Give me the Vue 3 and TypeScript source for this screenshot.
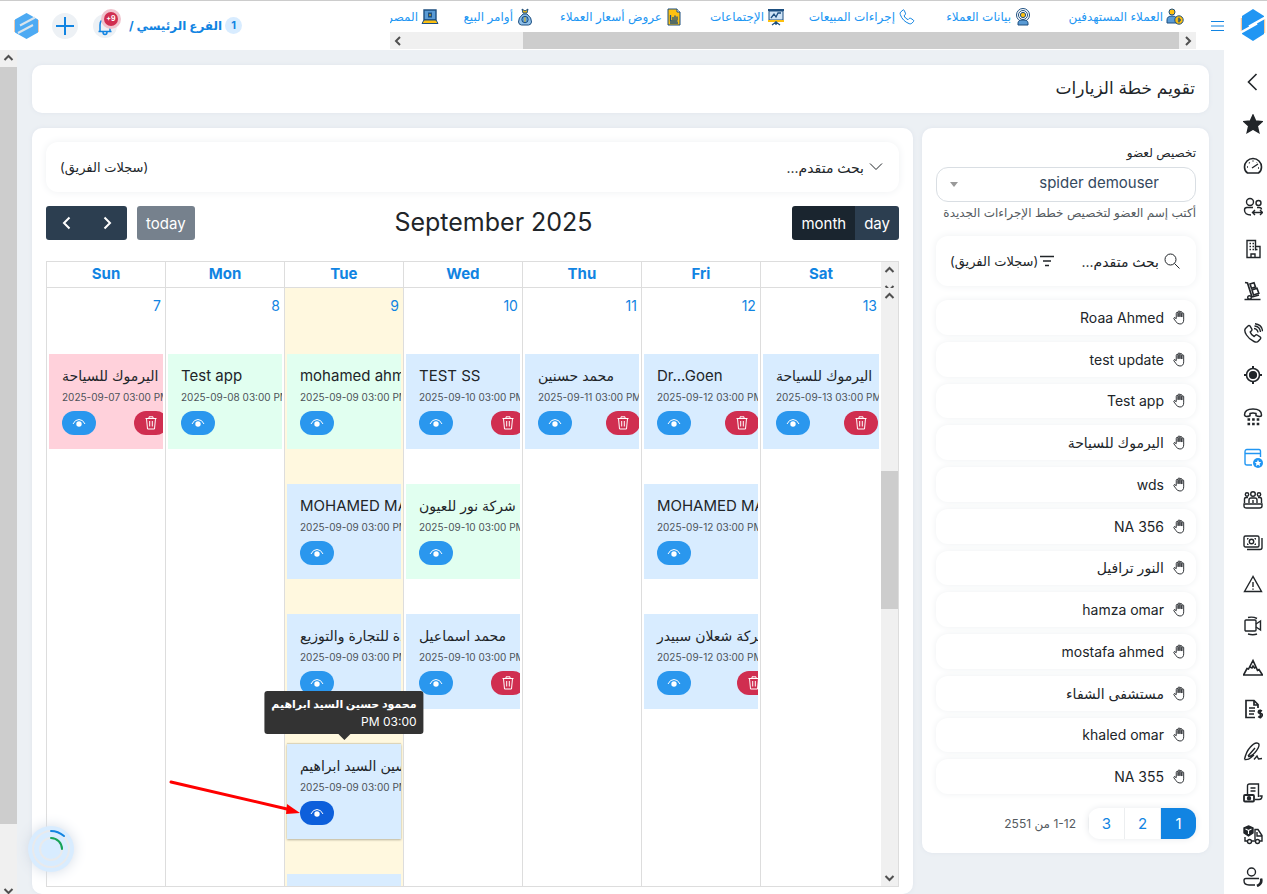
<script setup lang="ts">
import { ref } from 'vue'

interface VisitEvent {
  title: string
  time: string
  tone: 'pink' | 'green' | 'blue'
  remove?: 'near' | 'mid' | 'far'
  active?: boolean
}
interface Day {
  name: string
  date: number
  today?: boolean
  events: VisitEvent[]
}

const topLinks = [
  { label: 'العملاء المستهدفين', icon: 'lead' },
  { label: 'بيانات العملاء', icon: 'target' },
  { label: 'إجراءات المبيعات', icon: 'phone' },
  { label: 'الإجتماعات', icon: 'board' },
  { label: 'عروض أسعار العملاء', icon: 'quote' },
  { label: 'أوامر البيع', icon: 'bag' },
  { label: 'المصروفات', icon: 'laptop' },
]

const topIcons: Record<string, string> = {
  lead: '<circle cx="6" cy="4" r="3" fill="#fdc010" stroke="#1d4f80"/><path d="M1 15v-3q0-4 5-4t5 4v3z" fill="#5a9bd5" stroke="#1d4f80"/><circle cx="13" cy="12" r="4.2" fill="#fdc010" stroke="#1d4f80"/><path d="M13 9.5v5M11.8 11h2.4v2h-2.4" fill="none" stroke="#1d4f80"/>',
  target: '<circle cx="9" cy="7" r="6.5" fill="none" stroke="#1d4f80"/><circle cx="9" cy="7" r="4.5" fill="none" stroke="#1d4f80"/><circle cx="9" cy="7" r="2.6" fill="#fdc010" stroke="#1d4f80"/><path d="M4 17v-2q0-3 5-3t5 3v2z" fill="#5a9bd5" stroke="#1d4f80"/>',
  phone: '<path d="M5 2 2.500 4.200Q1.800 5 2.300 6.600 4.500 13 11.200 15.700q1.600.5 2.600-.4l1.700-1.800q.6-.8-.2-1.500l-2.600-1.700q-.8-.4-1.500.2l-1.200 1.200Q7 10.300 6 7.800l1.200-1.100q.7-.8.2-1.600L6.200 2.300Q5.700 1.500 5 2Z" fill="none" stroke="#1184e2"/>',
  board: '<path d="M1 2h16" stroke="#1d4f80" stroke-width="2"/><path d="M2 3h14v9H2z" fill="#cfe4f7" stroke="#1d4f80"/><path d="M1 13h16" stroke="#fdc010" stroke-width="2"/><path d="M4 10l3-4 2 3 2-4 3 0M9 13v4M5 17l4-3 4 3" fill="none" stroke="#1d4f80" stroke-width="1.300"/>',
  quote: '<path d="M3 1h9l3 3v13H3z" fill="#fdc010" stroke="#1d4f80"/><path d="M12 1v3h3" fill="#fff" stroke="#1d4f80"/><path d="M5.500 7v6h7M8 12V9M10 12V7.500M12 12V8.500M5 15h8" stroke="#1d4f80" stroke-width="1.300" fill="none"/>',
  bag: '<path d="M6 1l3 2 3-2-1 4H7z" fill="#fdc010" stroke="#1d4f80"/><path d="M7 6h4q5 4 4.500 8-.5 3-3 3h-7q-2.500 0-3-3Q2 10 7 6z" fill="#8fc0ea" stroke="#1d4f80"/><circle cx="9" cy="11.500" r="3.200" fill="#5a9bd5" stroke="#1d4f80"/><path d="M9 9.300v4.500" stroke="#fdc010"/>',
  laptop: '<path d="M3 2h12v10H3z" fill="#5a9bd5" stroke="#1d4f80" stroke-width="1.400"/><path d="M7 4.500h4v5H7z" fill="#1d4f80"/><path d="M8 7h2" stroke="#fdc010"/><path d="M3 12h12l2 3.500H1z" fill="#fdc010" stroke="#1d4f80"/>',
}

const sideLinks = [
  { label: 'رجوع', d: '<path d="M13.500 2 5.500 10l8 8" stroke-width="1.600"/>' },
  { label: 'المفضلة', d: '<path fill="currentColor" d="m10 1 2.700 6 6.500.6-4.900 4.400 1.500 6.500-5.800-3.400-5.800 3.400 1.500-6.500L.8 7.600 7.300 7z"/>' },
  { label: 'لوحة التحكم', d: '<path stroke-width="1.600" d="M4.500 17Q1.500 15 1.500 11a8.500 8.500 0 0 1 17 0q0 4-3 6z"/><path d="M9 12l6-4M4 11h1M6 6.500l.7.7M10 4.500v1M14 6.500l-.3.3M15 12h1"/>' },
  { label: 'العملاء', d: '<circle cx="7" cy="5" r="3.500"/><circle cx="15.500" cy="6" r="2.500"/><path d="M8 18Q1.500 18 1.500 13q0-2.500 2.500-2.500h6M14 10.500h2q2.500 0 2.500 2M9.500 15.500h10M12 13l-2.500 2.500L12 18M17 13l2.500 2.500L17 18"/>' },
  { label: 'الشركات', d: '<path d="M4 18.500V1.500h8.500v6h4.500v11zM12.500 7.500v4M8 18.500v-3.500h4v3.500"/><path stroke-dasharray="1.500 1.500" d="M6.500 4.500h4.500M6.500 7.500h4.500M6.500 10.500h4.500M13 10.500h3"/>' },
  { label: 'المخزون', d: '<path d="M2 1.500 4.500 2 9 16M1.500 18.500h16M9 16l7-2" stroke-width="1.700"/><circle cx="6.500" cy="16.500" r="1.800"/><path stroke-width="1.600" d="m7 3 4-1.300 1.500 4.300-4 1.300zM9 9l5-1.700 1.800 5-5.300 1.700z"/>' },
  { label: 'المكالمات', d: '<path d="M5 3 2.500 5.500Q.7 7.500 3.500 12t7.500 6.500q3 1.500 4.500-.5l1.800-2q1-1.200-.3-2.200l-2.800-1.800q-1-.6-1.800.3l-1.200 1.200q-3-1.500-4-4.500l1.300-1.300q.8-.8.200-1.800L7 3Q6 2 5 3ZM11 5.500q3.500.5 4 4M11.500 3q5.500.5 6 6M12 .8q7 .7 7.500 7.500"/>' },
  { label: 'الموقع', d: '<circle cx="10" cy="10" r="6.500" stroke-width="1.600"/><circle cx="10" cy="10" r="3.400" fill="currentColor"/><path stroke-width="2" d="M10 1v3M10 16v3M1 10h3M16 10h3"/>' },
  { label: 'الاتصال', d: '<path stroke-width="1.500" d="M1.500 8q0-6 8.500-6t8.500 6q0 1.500-2 1.500t-3.500-.8V6.500q-3-1-6 0v2.200Q5 9.500 3.500 9.500t-2-1.500Z"/><path stroke-width="2.400" stroke-dasharray="2.600 2" d="M4.500 12.500h12M4.500 17h12"/>' },
  { label: 'خطة الزيارات', active: true, d: '<path d="M9 17H4q-2 0-2-2V4q0-2.500 2-2.500h12q1.500 0 1.500 2V9M2 5.500h15.500"/><circle cx="15" cy="15" r="5" fill="currentColor" stroke="none"/><path fill="#fff" stroke="none" d="m15 11.700 1 2.200 2.300.2-1.700 1.500.5 2.300-2.100-1.200-2.100 1.200.5-2.300-1.700-1.500 2.300-.2z"/>' },
  { label: 'الاجتماعات', d: '<circle cx="10" cy="4" r="2.300"/><circle cx="4" cy="4.500" r="1.700"/><circle cx="16" cy="4.500" r="1.700"/><path d="M1.500 13V9q0-1.500 2-1.500H5M6 13V10q0-2 2-2h4q2 0 2 2v3M10 13v-3M15 7.500h1.500q2 0 2 1.500v4M1 14h18v2q0 2-2.500 2h-13Q1 18 1 16z"/>' },
  { label: 'المدفوعات', d: '<rect x="1" y="4" width="15" height="11" rx="1.500"/><circle cx="8.500" cy="9.500" r="2.200"/><path d="M4 7q1 0 1-1M13 7q-1 0-1-1M4 12q1 0 1 1M13 12q-1 0-1 1M4 17.500h13q2 0 2-2V6"/>' },
  { label: 'التنبيهات', d: '<path d="M10 2.500 1.500 17.500h17zM10 8v5M10 14.500v1.200"/>' },
  { label: 'الفيديو', d: '<rect x="2" y="4" width="11" height="11" rx="1"/><path d="m13 8 4.500-3v9L13 11M5 1.500q5-1 9 1M5 18q5 1.500 9 0"/>' },
  { label: 'الأهداف', d: '<path d="M.5 17h19L16 11.500l-1.500.8L10 2.500 5.500 11 4 10.500zM7 9l2 1 1-2 1.500 2L13 9" stroke-width="1.600"/>' },
  { label: 'الفواتير', d: '<path d="M12 18.500H3v-17h8l4 4V9M11 1.500v4.500h4" stroke-width="1.700"/><path d="M6 9h6M6 12h6M6 15h5" stroke-width="1.500"/><path d="M19 12q-3-1.500-3.500.5t2 2 1.500 2.500-3.800.5M17.300 10.500v9" stroke-width="1.700"/>' },
  { label: 'العقود', d: '<path d="M1.500 18.500Q3 11 7 6.500 12 .5 15.500 2.500 17.500 5 12 11.500 8 16 5 15.500M5 15l7-8M1.500 18.500q4 .5 6.500-2l3-2.500M11 18.500l3-3.500 1.500 3 3.500-.5"/>' },
  { label: 'الإيصالات', d: '<path d="M4.500 11V3q0-2 2-2h9v13M7.500 5h5M7.500 8h5M12 16.500h4q3 0 3-3.500h-2.500"/><rect x="1" y="12" width="10" height="6.500" rx="1" stroke-width="1.800"/><circle cx="6" cy="15.200" r="1.500" fill="currentColor"/>' },
  { label: 'التوصيل', d: '<path fill="currentColor" d="m5.500 1 4.500 2v5l-4.500 3L1 8V3z"/><path stroke="#fff" stroke-width="1.100" d="m2.500 4 3 1.400 3-1.400M5.500 5.500V9"/><path d="M2 12v4h2M9 16h3M12 15V4.500h3l4 6V16h-2M14 7v4h5"/><circle cx="6.500" cy="16.500" r="2"/><circle cx="14.500" cy="16.500" r="2"/>' },
  { label: 'خدمة العملاء', d: '<circle cx="8.500" cy="5" r="4"/><path d="M12 18H6Q1 18 1 13.500q0-2 2-2h13"/><path stroke-width="2.600" d="M18 11.500q1.500 5-4 7.500"/>' },
]

const members = [
  'Roaa Ahmed', 'test update', 'Test app', 'اليرموك للسياحة', 'wds', 'NA 356',
  'النور ترافيل', 'hamza omar', 'mostafa ahmed', 'مستشفى الشفاء', 'khaled omar', 'NA 355',
]

const days: Day[] = [
  { name: 'Sun', date: 7, events: [
    { title: 'اليرموك للسياحة', time: '2025-09-07 03:00 PM', tone: 'pink', remove: 'mid' },
  ] },
  { name: 'Mon', date: 8, events: [
    { title: 'Test app', time: '2025-09-08 03:00 PM', tone: 'green' },
  ] },
  { name: 'Tue', date: 9, today: true, events: [
    { title: 'mohamed ahmed', time: '2025-09-09 03:00 PM', tone: 'green' },
    { title: 'MOHAMED MAHMOUD', time: '2025-09-09 03:00 PM', tone: 'blue' },
    { title: 'المتحدة للتجارة والتوزيع', time: '2025-09-09 03:00 PM', tone: 'blue' },
    { title: 'محمود حسين السيد ابراهيم', time: '2025-09-09 03:00 PM', tone: 'blue', active: true },
    { title: 'شركة النور', time: '2025-09-09 03:00 PM', tone: 'blue' },
  ] },
  { name: 'Wed', date: 10, events: [
    { title: 'TEST SS', time: '2025-09-10 03:00 PM', tone: 'blue', remove: 'mid' },
    { title: 'شركة نور للعيون', time: '2025-09-10 03:00 PM', tone: 'green' },
    { title: 'محمد اسماعيل', time: '2025-09-10 03:00 PM', tone: 'blue', remove: 'mid' },
  ] },
  { name: 'Thu', date: 11, events: [
    { title: 'محمد حسنين', time: '2025-09-11 03:00 PM', tone: 'blue', remove: 'near' },
  ] },
  { name: 'Fri', date: 12, events: [
    { title: 'Dr...Goen', time: '2025-09-12 03:00 PM', tone: 'blue', remove: 'near' },
    { title: 'MOHAMED MAHMOUD', time: '2025-09-12 03:00 PM', tone: 'blue' },
    { title: 'شركة شعلان سبيدر', time: '2025-09-12 03:00 PM', tone: 'blue', remove: 'far' },
  ] },
  { name: 'Sat', date: 13, events: [
    { title: 'اليرموك للسياحة', time: '2025-09-13 03:00 PM', tone: 'blue', remove: 'near' },
  ] },
]

const isArabic = (s: string) => /[\u0600-\u06ff]/.test(s)
const member = ref('spider demouser')
const page = ref(1)
const view = ref('month')
</script>

<template>
  <div class="app" dir="rtl">
    <aside class="side">
      <a href="#" class="brand" aria-label="Spider">
        <svg width="26" height="32" viewBox="0 0 26 32">
          <path d="M1.500 9v15M24.500 9v15" stroke="#f8c9a0" stroke-width="1.500" />
          <path d="M13 0 24 7v18l-11 7L2 25V7z" fill="#2196f3" />
          <path d="M26 8 9 17.500M0 24 17 14.500" stroke="#fff" stroke-width="2.500" />
        </svg>
      </a>
      <nav class="side-nav">
        <a v-for="s in sideLinks" :key="s.label" href="#" :aria-label="s.label" :class="{ on: s.active }">
          <svg width="20" height="20" viewBox="0 0 20 20" fill="none" stroke="currentColor" stroke-width="1.400" v-html="s.d" />
        </a>
      </nav>
    </aside>

    <div class="body">
      <header class="top">
        <button class="burger" aria-label="القائمة">
          <svg width="13" height="14" viewBox="0 0 13 14"><path d="M0 2.500h13M0 7h13M0 11.500h13" stroke="#1184e2" /></svg>
        </button>
        <div class="links">
          <nav class="link-row">
            <a v-for="l in topLinks" :key="l.icon" href="#">
              <svg width="18" height="18" viewBox="0 0 18 18" v-html="topIcons[l.icon]" />
              <span>{{ l.label }}</span>
            </a>
          </nav>
          <div class="hbar">
            <svg width="17" height="17" viewBox="0 0 17 17"><path d="m7 5 4 4-4 4" /></svg>
            <i class="hthumb" />
            <i class="hrest" />
            <svg width="17" height="17" viewBox="0 0 17 17"><path d="M10 5 6 9l4 4" /></svg>
          </div>
        </div>
        <div class="account">
          <span class="count">1</span>
          <a href="#" class="branch">الفرع الرئيسي /</a>
          <button class="bell" aria-label="الإشعارات">
            <svg width="16" height="20" viewBox="0 0 16 20"><path d="M1.500 15.500h13M3 15V9q0-5.500 5-5.500T13 9v6M6 16q0 2.500 2 2.500t2-2.500" fill="none" stroke="#1184e2" stroke-width="1.500" /></svg>
            <b>9+</b>
          </button>
          <button class="plus" aria-label="إضافة">
            <svg width="18" height="18" viewBox="0 0 18 18"><path d="M9 0v18M0 9h18" stroke="#1184e2" stroke-width="2" /></svg>
          </button>
          <a href="#" class="mini" aria-label="Spider">
            <svg width="25" height="26" viewBox="0 0 25 26">
              <path d="M1 7v12M24 7v12" stroke="#f3cdb0" stroke-width="2" />
              <path d="M12.500 0 24 6.500v13L12.500 26 1 19.500v-13z" fill="#4daaf3" />
              <path d="M21 4.500 6 12.500M19 12 4 20" stroke="#d9e4ec" stroke-width="2" />
            </svg>
          </a>
        </div>
      </header>

      <div class="scroller">
        <main class="content">
          <h1 class="card title">تقويم خطة الزيارات</h1>
          <div class="cols">
            <section class="card assign">
              <label for="member" class="lbl">تخصيص لعضو</label>
              <div class="picker">
                <select id="member" v-model="member"><option>spider demouser</option></select>
              </div>
              <p class="hint">أكتب إسم العضو لتخصيص خطط الإجراءات الجديدة</p>
              <div class="filter">
                <button>
                  <svg width="16" height="16" viewBox="0 0 16 16" fill="none" stroke="#212529"><circle cx="6.500" cy="6.500" r="5.500" /><path d="m10.500 10.500 5 5" /></svg>
                  <span>بحث متقدم...</span>
                </button>
                <button class="records">
                  <svg width="14" height="12" viewBox="0 0 14 12"><path d="M0 1.500h14M3 6h8M5 10.500h4" stroke="#212529" stroke-width="1.500" /></svg>
                  <span>(سجلات الفريق)</span>
                </button>
              </div>
              <ul class="members">
                <li v-for="m in members" :key="m">
                  <svg width="13" height="15" viewBox="0 0 14 16" fill="none" stroke="#212529"><path d="M3.500 9V3.500q0-1 1-1t1 1V7.500M5.500 7V2q0-1 1-1t1 1v5.500M7.500 7V2.500q0-1 1-1t1 1v5M9.500 7.500V4q0-1 1-1t1 1v6.500q0 4.500-4 4.500-3 0-4.200-2.500L1 9.500q-.4-1 .4-1.400.8-.3 1.300.4l.8 1.200" /></svg>
                  <span>{{ m }}</span>
                </li>
              </ul>
              <div class="pager">
                <div class="pages">
                  <button v-for="n in 3" :key="n" :class="{ on: page === n }" @click="page = n">{{ n }}</button>
                </div>
                <span>1-12 من 2551</span>
              </div>
            </section>

            <section class="card cal">
              <div class="filter">
                <button>
                  <svg width="14" height="10" viewBox="0 0 14 10" fill="none" stroke="#212529"><path d="m1 1.500 6 6 6-6" /></svg>
                  <span>بحث متقدم...</span>
                </button>
                <span>(سجلات الفريق)</span>
              </div>
              <div class="bar" dir="ltr">
                <div class="left">
                  <div class="group">
                    <button class="nav" aria-label="prev"><svg width="12" height="14" viewBox="0 0 12 14"><path d="M8.500 1.500 3 7l5.500 5.500" /></svg></button>
                    <button class="nav" aria-label="next"><svg width="12" height="14" viewBox="0 0 12 14"><path d="M3.500 1.500 9 7l-5.500 5.500" /></svg></button>
                  </div>
                  <button class="today-btn">today</button>
                </div>
                <h2>September 2025</h2>
                <div class="group">
                  <button :class="{ on: view === 'month' }" @click="view = 'month'">month</button>
                  <button :class="{ on: view === 'day' }" @click="view = 'day'">day</button>
                </div>
              </div>
              <div class="grid" dir="ltr">
                <div class="view">
                  <table>
                    <thead><tr><th v-for="d in days" :key="d.name" scope="col">{{ d.name }}</th></tr></thead>
                    <tbody>
                      <tr>
                        <td v-for="d in days" :key="d.name" :class="{ today: d.today }">
                          <a href="#" class="num">{{ d.date }}</a>
                          <div v-for="(e, i) in d.events" :key="i" class="slot">
                            <article class="event" :class="[e.tone, { hover: e.active }]">
                              <h3 :class="{ ar: isArabic(e.title) }">{{ e.title }}</h3>
                              <time>{{ e.time }}</time>
                              <div class="acts">
                                <button class="eye" aria-label="عرض">
                                  <svg width="14" height="10" viewBox="0 0 14 10"><path d="M1 6Q3 1.500 7 1.500T13 6" fill="none" stroke="#fff" /><circle cx="7" cy="6" r="2.700" fill="#fff" /></svg>
                                </button>
                                <button v-if="e.remove" class="del" :class="e.remove" aria-label="حذف">
                                  <svg width="12" height="14" viewBox="0 0 12 14" fill="none" stroke="#fff"><path d="M.5 2.500h11M4 2.500V.8h4v1.700M1.500 2.500 2.500 13h7l1-10.500M4.700 5v5.500M7.300 5v5.500" /></svg>
                                </button>
                              </div>
                            </article>
                            <template v-if="e.active">
                              <div class="tip" dir="rtl" role="tooltip"><b>{{ e.title }}</b><span>03:00 PM</span></div>
                              <svg class="pointer" width="132" height="40" viewBox="0 0 132 40">
                                <path d="M2 3 118 30" stroke="#f00" stroke-width="3" stroke-linecap="round" />
                                <path d="m118 25 13 9-14 1z" fill="#f00" />
                              </svg>
                            </template>
                          </div>
                        </td>
                      </tr>
                    </tbody>
                  </table>
                </div>
                <div class="bars">
                  <div class="vbar short">
                    <svg width="17" height="17" viewBox="0 0 17 17"><path d="m4.500 10 4-4 4 4" /></svg>
                    <svg width="17" height="17" viewBox="0 0 17 17"><path d="m4.500 7 4 4 4-4" /></svg>
                  </div>
                  <div class="vbar">
                    <svg width="17" height="17" viewBox="0 0 17 17"><path d="m4.500 10 4-4 4 4" /></svg>
                    <i class="before" /><i class="thumb" /><i class="after" />
                    <svg width="17" height="17" viewBox="0 0 17 17"><path d="m4.500 7 4 4 4-4" /></svg>
                  </div>
                </div>
              </div>
            </section>
          </div>
        </main>
        <div class="vbar page-bar">
          <svg width="17" height="17" viewBox="0 0 17 17"><path d="m4.500 10 4-4 4 4" /></svg>
          <i class="thumb" />
          <svg class="low" width="17" height="70" viewBox="0 0 17 70"><path d="m4.500 65 4 4 4-4" /></svg>
        </div>
      </div>
    </div>

    <div class="loader">
      <svg width="46" height="46" viewBox="0 0 46 46" fill="none" stroke-width="2">
        <circle cx="23" cy="23" r="18" stroke="#e8eaed" />
        <circle cx="23" cy="23" r="11" stroke="#e8eaed" />
        <path d="M23 5q7 0 13 5" stroke="#1184e2" stroke-linecap="round" />
        <path d="M23 12a11 11 0 0 1 11 11" stroke="#16a35a" stroke-linecap="round" />
      </svg>
    </div>
  </div>
</template>

<style>
body { margin: 0; }
</style>

<style scoped>
.app, .app * { box-sizing: border-box; }
.app {
  --blue: #1184e2;
  --line: #ddd;
  position: relative;
  display: flex;
  height: 100vh;
  overflow: hidden;
  font-family: Inter, "DejaVu Sans", sans-serif;
  font-size: 15px;
  color: #212529;
  background: #ecf0f4;
  border-top: 1px solid #ccc;
}
button { border: 0; background: none; padding: 0; font: inherit; color: inherit; cursor: pointer; }
a { text-decoration: none; color: inherit; }
h1, h2, h3, p, ul { margin: 0; padding: 0; font-weight: 400; list-style: none; }
svg { display: block; flex: none; }

.side { flex: 0 0 43px; display: flex; flex-direction: column; background: #fff; padding-bottom: 7px; }
.brand { height: 71px; padding: 8px 1px 0 0; display: flex; }
.side-nav { flex: 1; display: flex; flex-direction: column; justify-content: space-between; padding-right: 4px; }
.side-nav a.on { color: #2196f3; }

.body { flex: 1; min-width: 0; display: flex; flex-direction: column; }
.top { height: 49px; flex: none; display: flex; background: #fff; }
.burger { width: 13px; margin-left: 15px; }
.links { flex: 1; min-width: 0; overflow: hidden; display: flex; flex-direction: column; }
.link-row { height: 31px; display: grid; grid-template-columns: 123px 87px 102px 73px 120px 66px 120px; gap: 29px; padding-right: 12px; align-items: center; }
.link-row a { display: flex; align-items: center; gap: 3px; white-space: nowrap; font-size: 12px; color: #2196f3; }
.hbar { height: 17px; display: flex; background: #f0f0f0; }
.hbar path, .vbar path { fill: none; stroke: #505050; stroke-width: 2; }
.hthumb { flex: 656; background: #cdcdcd; }
.hrest { flex: 116; }
.account { flex: 0 0 390px; display: flex; align-items: center; justify-content: flex-end; padding-left: 14px; }
.count { width: 17px; height: 17px; border-radius: 9px; background: #d8ecff; color: var(--blue); font-size: 11px; font-weight: 700; text-align: center; line-height: 17px; margin-left: 3px; }
.branch { color: var(--blue); font-weight: 700; font-size: 12px; white-space: nowrap; }
.bell, .plus { position: relative; width: 26px; height: 26px; border-radius: 13px; background: #edf1f5; display: grid; place-items: center; }
.bell { width: 24px; height: 24px; margin: 0 12px 0 15px; }
.bell b { position: absolute; left: 11px; top: -2px; width: 14px; height: 14px; border-radius: 7px; background: #d02e50; color: #fff; font-size: 7px; line-height: 14px; box-shadow: 0 0 0 3px #f0c3cd; }
.mini { margin-right: 13px; }

.scroller { flex: 1; min-height: 0; display: flex; }
.content { flex: 1; min-width: 0; padding: 15px 15px 0; display: flex; flex-direction: column; gap: 15px; }
.card { background: #fff; border-radius: 10px; box-shadow: 0 0 4px #dfe4ec; }
.title { flex: none; height: 48px; padding: 0 14px; font-size: 17px; line-height: 46px; font-weight: 400; }
.cols { flex: 1; min-height: 0; display: flex; gap: 9px; align-items: flex-start; }
.assign { flex: 0 0 287px; padding: 17px 13px 14px 14px; }
.cal { flex: 1; min-width: 0; height: 100%; padding: 14px 14px 7px; display: flex; flex-direction: column; }

.lbl { display: block; font-size: 12px; line-height: 16px; margin-bottom: 6px; }
.picker { position: relative; }
.picker::after { content: ""; position: absolute; left: 14px; top: 15px; border: 4px solid transparent; border-top: 5px solid #999; border-bottom: 0; }
select { display: block; width: 100%; height: 35px; appearance: none; border: 1px solid #d9dee3; border-radius: 12px; background: #fff; font: inherit; color: #34495e; padding: 0 36px 4px; direction: rtl; }
.hint { font-size: 12px; line-height: 20px; color: #555b61; white-space: nowrap; margin: 1px 0 13px; }
.filter { height: 50px; flex: none; border-radius: 12px; box-shadow: 0 0 8px #eef0f2; display: flex; align-items: center; justify-content: space-between; padding: 0 16px 0 14px; font-size: 13px; }
.filter button { display: flex; align-items: center; gap: 5px; white-space: nowrap; font-size: 14px; }
.filter .records { gap: 2px; font-size: 13px; }
.members { display: grid; grid-auto-rows: 1fr; gap: 7px; min-height: 494px; margin: 14px 0; font-size: 14px; }
.members li { display: flex; align-items: center; gap: 9px; padding: 0 10px; border-radius: 12px; box-shadow: 0 0 7px #eef0f2; }
.pager { display: flex; align-items: center; gap: 12px; font-size: 12px; color: #555b61; }
.pages { display: flex; border-radius: 12px; overflow: hidden; box-shadow: 0 0 7px #e8eaed; }
.pages button { width: 36px; height: 31px; color: var(--blue); font-size: 15px; border-left: 1px solid #eceef0; }
.pages button.on { background: var(--blue); color: #fff; }

.bar { display: flex; align-items: center; justify-content: space-between; margin: 14px 0 21px; height: 34px; flex: none; }
.left { display: flex; gap: 10px; }
.group { display: flex; border-radius: 3px; overflow: hidden; }
.group button, .today-btn { height: 34px; padding: 0 9px; background: #2c3e50; color: #fff; }
.group .nav { width: 41px; display: grid; place-items: center; }
.group .nav:last-child { width: 40px; }
.nav path { fill: none; stroke: #fff; stroke-width: 2; }
.group .on { background: #1a252f; }
.today-btn { border-radius: 3px; background: #76818d; }
.bar h2 { font-size: 25px; line-height: 34px; padding-bottom: 2px; }

.grid { flex: 1; min-height: 0; display: flex; border: 1px solid var(--line); border-left: 0; }
.view { flex: 1; min-width: 0; overflow: hidden; }
table { width: 100%; min-height: 100%; border-collapse: separate; border-spacing: 0; table-layout: fixed; }
th, td { padding: 0; border-left: 1px solid var(--line); vertical-align: top; }
th { height: 26px; padding-bottom: 2px; border-bottom: 1px solid var(--line); color: var(--blue); font-weight: 700; vertical-align: middle; }
th:not(:last-child) { width: 14.25%; }
td { padding: 0 2px; }
td.today { background: #fff8df; }
.num { display: block; height: 66px; padding: 9px 2px 0; font-size: 14px; line-height: 18px; text-align: right; color: var(--blue); }
.slot { position: relative; margin-bottom: 35px; }
.event { height: 95px; padding: 12px 0 0 13px; overflow: hidden; white-space: nowrap; }
.pink { background: #ffd1db; }
.green { background: #e1fff0; }
.blue { background: #d8ecff; }
.hover { box-shadow: 0 1px 2px #b9b29a, 0 -1px 1px #e0d8bd; }
.event h3 { font-size: 15px; line-height: 20px; }
.event h3.ar { font-size: 14px; }
.event time { display: block; font-size: 10px; line-height: 16px; margin-top: 3px; color: #4c5258; }
.acts { display: flex; margin-top: 6px; gap: 38px; }
.acts button { flex: none; width: 34px; height: 24px; border-radius: 12px; display: grid; place-items: center; background: #2a97ee; }
.hover .acts .eye { background: #0d5fdb; }
.acts .del { background: #d02e50; }
.del.near { margin-left: -4px; }
.del.far { margin-left: 8px; }

.tip { position: absolute; z-index: 3; left: 50%; bottom: calc(100% + 10px); transform: translateX(-50%); padding: 5px 7px 4px; border-radius: 3px; background: #333; color: #fff; font-size: 12px; line-height: 17px; white-space: nowrap; }
.tip b { display: block; font-size: 11px; }
.tip span { display: block; }
.tip::after { content: ""; position: absolute; left: calc(50% - 6px); top: 100%; border: 6px solid transparent; border-top-color: #333; border-bottom: 0; }
.pointer { position: absolute; z-index: 2; left: -118px; top: 35px; }

.bars { flex: 0 0 17px; display: flex; flex-direction: column; }
.vbar { flex: 1; min-height: 0; width: 17px; display: flex; flex-direction: column; background: #f0f0f0; }
.vbar.short { flex: 0 0 26px; overflow: hidden; }
.vbar .thumb { background: #cdcdcd; }
.bars .before { flex: 166; }
.bars .thumb { flex: 138; }
.bars .after { flex: 260; }
.page-bar { flex: 0 0 17px; }
.page-bar .thumb { flex: 1; }

.loader { position: absolute; left: 28px; bottom: 22px; width: 46px; height: 46px; border-radius: 23px; background: #d8ecff; box-shadow: 0 0 14px #d3dbe6; }
</style>
